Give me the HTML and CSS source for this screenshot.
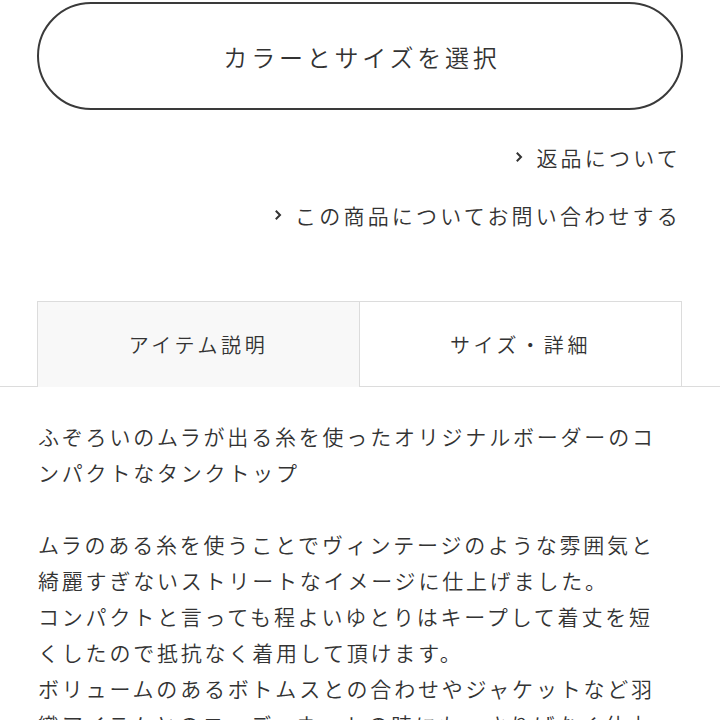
FILE: index.html
```html
<!DOCTYPE html>
<html lang="ja">
<head>
<meta charset="utf-8">
<link rel="stylesheet" href="styles.css">
</head>
<body>
<div class="top">
  <button class="select-btn">カラーとサイズを選択</button>
  <div class="links">
    <a class="link" href="#"><svg class="chev" viewBox="0 0 8 12" width="8" height="12"><path d="M1.8 1.8 L6 6 L1.8 10.2" fill="none" stroke="#333" stroke-width="2"/></svg>返品について</a>
    <a class="link" href="#"><svg class="chev" viewBox="0 0 8 12" width="8" height="12"><path d="M1.8 1.8 L6 6 L1.8 10.2" fill="none" stroke="#333" stroke-width="2"/></svg>この商品についてお問い合わせする</a>
  </div>
</div>
<div class="tabs">
  <div class="tab active">アイテム説明</div>
  <div class="tab">サイズ・詳細</div>
</div>
<div class="desc">
  <p>ふぞろいのムラが出る糸を使ったオリジナルボーダーのコンパクトなタンクトップ</p>
  <p>ムラのある糸を使うことでヴィンテージのような雰囲気と綺麗すぎないストリートなイメージに仕上げました。<br>コンパクトと言っても程よいゆとりはキープして着丈を短くしたので抵抗なく着用して頂けます。<br>ボリュームのあるボトムスとの合わせやジャケットなど羽織アイテムとのコーディネートの時にも、さりげなく仕上げ感を</p>
</div>
</body>
</html>
```
FILE: styles.css
```css
html, body {
  margin: 0;
  padding: 0;
  background: #fff;
}
body {
  font-family: "Noto Sans CJK JP", "Noto Sans", sans-serif;
  font-weight: 350;
  color: #333;
  width: 720px;
  overflow: hidden;
}
.top {
  padding: 2px 37px 0 37px;
}
.select-btn {
  display: flex;
  align-items: center;
  justify-content: center;
  width: 646px;
  height: 108px;
  border: 2px solid #3a3a3a;
  border-radius: 54px;
  background: #fff;
  font-family: inherit;
  font-weight: 350;
  font-size: 24px;
  letter-spacing: 3.8px;
  color: #333;
  padding: 0 0 0 4px;
  margin: 0;
}
.links {
  display: flex;
  flex-direction: column;
  align-items: flex-end;
  gap: 28px;
  padding-top: 32px;
  padding-right: 2px;
}
.link {
  display: flex;
  align-items: center;
  gap: 13px;
  font-size: 21px;
  line-height: 30px;
  letter-spacing: 3.2px;
  color: #333;
  text-decoration: none;
}
.chev {
  display: block;
}
.tabs {
  display: flex;
  margin-top: 71px;
  padding: 0 38px 0 37px;
  border-bottom: 1px solid #dcdcdc;
}
.tab {
  flex: 1;
  height: 84px;
  display: flex;
  align-items: center;
  justify-content: center;
  font-size: 20px;
  letter-spacing: 3.6px;
  color: #333;
  border-top: 1px solid #dcdcdc;
  border-right: 1px solid #dcdcdc;
  background: #fff;
}
.tab.active {
  background: #f8f8f8;
  border-left: 1px solid #dcdcdc;
  margin-bottom: -1px;
  height: 85px;
}
.desc {
  padding: 31px 50px 0 38px;
}
.desc p {
  margin: 0 0 36px 0;
  font-size: 21px;
  line-height: 36px;
  letter-spacing: 2.8px;
  color: #333;
}
```
